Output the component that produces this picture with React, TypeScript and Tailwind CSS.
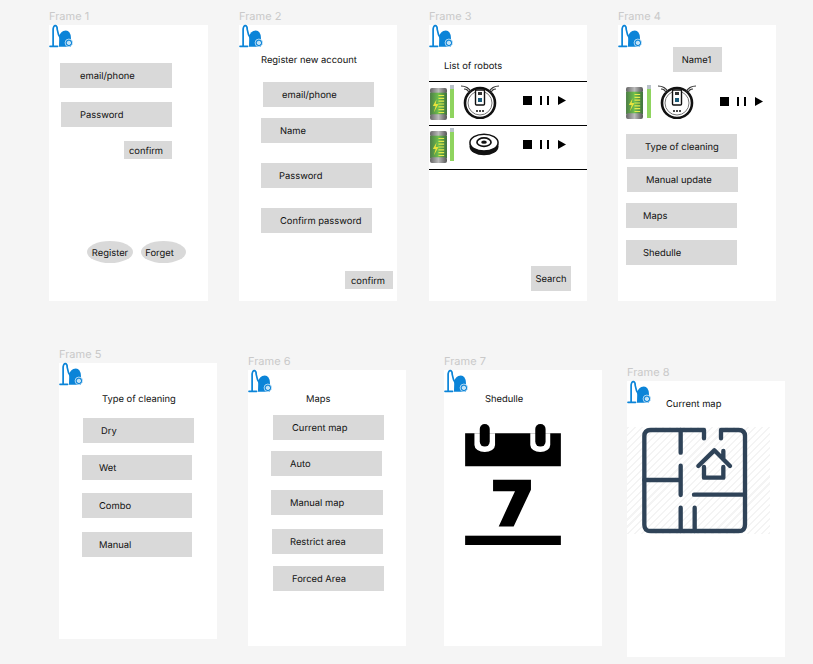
import type React from "react"

function VacuumIcon() {
  return (
    <svg viewBox="27 72 70 70" className="absolute left-0 top-[-1px] h-[24px] w-[24px]">
      <path d="M30 137 H52" stroke="#0b84d8" strokeWidth="5" strokeLinecap="round" fill="none" />
      <path d="M39 136 L39 86 Q41 76 46 77 Q51 78 51 88 Q53 104 62 116" stroke="#0b84d8" strokeWidth="5" fill="none" />
      <path d="M56 138 L57 108 Q60 92 76 91 Q90 92 91 112 L91 138 Z" fill="#0b84d8" />
      <circle cx="85" cy="127" r="11" fill="#0b84d8" stroke="#fff" strokeWidth="2" />
      <circle cx="85" cy="127" r="5" fill="#bfe3f8" stroke="#fff" strokeWidth="2" />
    </svg>
  )
}

function Battery({ className }: { className: string }) {
  return (
    <svg viewBox="3 1 18 34" className={`h-[32px] w-[17px] shrink-0 ${className}`}>
      <defs>
        <linearGradient id="batBody" x1="0" x2="1" y1="0" y2="0">
          <stop offset="0" stopColor="#4b7d45" />
          <stop offset="0.5" stopColor="#6fc04e" />
          <stop offset="1" stopColor="#3c6f3a" />
        </linearGradient>
        <linearGradient id="batCap" x1="0" x2="1" y1="0" y2="0">
          <stop offset="0" stopColor="#666" />
          <stop offset="0.5" stopColor="#bbb" />
          <stop offset="1" stopColor="#555" />
        </linearGradient>
      </defs>
      <rect x="3" y="1" width="18" height="6" rx="2" fill="url(#batCap)" />
      <rect x="3" y="6" width="18" height="24" fill="url(#batBody)" />
      <rect x="3" y="29" width="18" height="6" rx="2" fill="url(#batCap)" />
      <path d="M12 9h6M12 12h6M12 15h6M12 18h6M12 21h6M12 24h6M12 27h6" stroke="#e4ea4c" strokeWidth="1.2" />
      <path d="M10 13 L6 20 H9 L7 27 L12 18 H9 Z" fill="#e8e23c" />
    </svg>
  )
}

function RobotTop({ className }: { className: string }) {
  return (
    <svg viewBox="0 0 44 36" className={`h-[36px] w-[44px] shrink-0 ${className}`}>
      <circle cx="22" cy="20" r="15" fill="#fff" stroke="#111" strokeWidth="2.6" />
      <circle cx="22" cy="20" r="12" fill="none" stroke="#777" strokeWidth="1" />
      <rect x="17.5" y="7" width="9" height="15" rx="1" fill="#fff" stroke="#111" strokeWidth="1.4" />
      <rect x="20" y="9" width="4" height="3" fill="#333" />
      <rect x="20" y="15" width="4" height="4" fill="#1b5c7a" />
      <path d="M18 28h2M21 28h2M24 28h2" stroke="#111" strokeWidth="1.4" />
      <path d="M6 6 Q10 6 11 10M3 3 Q10 3 13 9M38 6 Q34 6 33 10M41 3 Q34 3 31 9" stroke="#333" strokeWidth="1.2" fill="none" />
    </svg>
  )
}

function RobotSide({ className }: { className: string }) {
  return (
    <svg viewBox="0 0 32 24" className={`h-[23px] w-[30px] shrink-0 ${className}`}>
      <ellipse cx="16" cy="14" rx="15.5" ry="9.5" fill="#111" />
      <ellipse cx="16" cy="10" rx="15" ry="9" fill="#fff" stroke="#111" strokeWidth="1.6" />
      <ellipse cx="16" cy="9.5" rx="7.5" ry="4.5" fill="#fff" stroke="#111" strokeWidth="1.8" />
      <ellipse cx="16" cy="9.5" rx="3" ry="1.8" fill="#111" />
    </svg>
  )
}

function Controls({ className }: { className: string }) {
  return (
    <div className={`flex items-center ${className}`}>
      <div className="h-[9px] w-[9px] bg-black" />
      <div className="ml-[8px] h-[9px] w-[2px] bg-black" />
      <div className="ml-[5px] h-[9px] w-[2px] bg-black" />
      <svg viewBox="0 0 8 9" className="ml-[9px] h-[9px] w-[8px]">
        <path d="M0 0 L8 4.5 L0 9 Z" fill="#000" />
      </svg>
    </div>
  )
}

function LevelBar({ className }: { className: string }) {
  return (
    <div className={`flex h-[33px] w-[4px] shrink-0 flex-col ${className}`}>
      <div className="h-[4px] bg-[#b9c2c9]" />
      <div className="flex-1 bg-[#8fd45f]" />
    </div>
  )
}

function Box({ className, children }: { className: string; children: React.ReactNode }) {
  return <div className={`flex items-center bg-[#d9d9d9] pt-[4px] text-[9.4px] text-[#111] ${className}`}>{children}</div>
}

function Frame({ label, className, children }: { label: string; className: string; children: React.ReactNode }) {
  return (
    <div className={`absolute flex h-[276px] w-[158px] flex-col bg-white ${className}`}>
      <div className="absolute left-0 top-[-16px] text-[11px] leading-[14px] text-[#c9c9c9]">{label}</div>
      <VacuumIcon />
      {children}
    </div>
  )
}

function Title({ className, children }: { className: string; children: React.ReactNode }) {
  return <div className={`text-[9.4px] leading-[14px] text-[#111] ${className}`}>{children}</div>
}

export default function App() {
  return (
    <div className="relative h-[664px] w-[813px] overflow-hidden bg-[#f5f5f5] font-['Inter',sans-serif] [text-rendering:geometricPrecision]">
      <Frame label="Frame 1" className="left-[49px] top-[25px] !w-[159px]">
        <Box className="ml-[11px] mt-[38px] h-[25px] w-[112px] pl-[20px]">email/phone</Box>
        <Box className="ml-[12px] mt-[14px] h-[25px] w-[111px] pl-[19px]">Password</Box>
        <Box className="ml-[75px] mt-[14px] h-[18px] w-[48px] justify-center pr-[4px]">confirm</Box>
        <div className="ml-[38px] mt-[82px] flex gap-[8px]">
          <Box className="h-[22px] w-[46px] justify-center rounded-[50%]">Register</Box>
          <Box className="h-[22px] w-[45px] justify-center rounded-[50%] pr-[8px]">Forget</Box>
        </div>
      </Frame>

      <Frame label="Frame 2" className="left-[239px] top-[25px]">
        <Title className="ml-[22px] mt-[29px]">Register new account</Title>
        <Box className="ml-[24px] mt-[14px] h-[25px] w-[111px] pl-[19px]">email/phone</Box>
        <Box className="ml-[22px] mt-[11px] h-[25px] w-[111px] pl-[19px]">Name</Box>
        <Box className="ml-[22px] mt-[20px] h-[25px] w-[111px] pl-[18px]">Password</Box>
        <Box className="ml-[22px] mt-[20px] h-[25px] w-[111px] pl-[19px]">Confirm password</Box>
        <Box className="ml-[106px] mt-[38px] h-[18px] w-[48px] justify-center pr-[2px]">confirm</Box>
      </Frame>

      <Frame label="Frame 3" className="left-[429px] top-[25px]">
        <Title className="ml-[15px] mt-[35px]">List of robots</Title>
        <div className="mt-[7px] border-t border-black">
          <div className="flex h-[43px] items-start">
            <Battery className="ml-[1px] mt-[6px]" />
            <LevelBar className="ml-[3px] mt-[3px]" />
            <RobotTop className="ml-[4px] mt-[1px]" />
            <Controls className="ml-[21px] mt-[14px]" />
          </div>
        </div>
        <div className="border-t border-black">
          <div className="flex h-[43px] items-start">
            <Battery className="ml-[1px] mt-[5px]" />
            <LevelBar className="ml-[3px] mt-[2px]" />
            <RobotSide className="ml-[15px] mt-[7px]" />
            <Controls className="ml-[24px] mt-[14px]" />
          </div>
        </div>
        <div className="border-t border-black" />
        <Box className="ml-[102px] mt-[96px] h-[25px] w-[40px] justify-center">Search</Box>
      </Frame>

      <Frame label="Frame 4" className="left-[618px] top-[25px]">
        <Box className="ml-[55px] mt-[22px] h-[25px] w-[49px] justify-center pr-[2px]">Name1</Box>
        <div className="mt-[11px] flex h-[37px] items-start">
          <Battery className="ml-[8px] mt-[4px]" />
          <LevelBar className="ml-[4px] mt-[2px]" />
          <RobotTop className="ml-[4px]" />
          <Controls className="ml-[21px] mt-[14px]" />
        </div>
        <Box className="ml-[8px] mt-[14px] h-[25px] w-[111px] pl-[19px]">Type of cleaning</Box>
        <Box className="ml-[9px] mt-[8px] h-[25px] w-[111px] pl-[19px]">Manual update</Box>
        <Box className="ml-[8px] mt-[11px] h-[25px] w-[111px] pl-[17px]">Maps</Box>
        <Box className="ml-[8px] mt-[12px] h-[25px] w-[111px] pl-[17px]">Shedulle</Box>
      </Frame>

      <Frame label="Frame 5" className="left-[59px] top-[363px]">
        <Title className="ml-[43px] mt-[30px]">Type of cleaning</Title>
        <Box className="ml-[24px] mt-[11px] h-[25px] w-[111px] pl-[18px]">Dry</Box>
        <Box className="ml-[23px] mt-[12px] h-[25px] w-[110px] pl-[17px]">Wet</Box>
        <Box className="ml-[23px] mt-[13px] h-[25px] w-[110px] pl-[17px]">Combo</Box>
        <Box className="ml-[23px] mt-[14px] h-[25px] w-[110px] pl-[17px]">Manual</Box>
      </Frame>

      <Frame label="Frame 6" className="left-[248px] top-[370px]">
        <Title className="ml-[58px] mt-[23px]">Maps</Title>
        <Box className="ml-[25px] mt-[8px] h-[25px] w-[111px] pl-[19px]">Current map</Box>
        <Box className="ml-[23px] mt-[11px] h-[25px] w-[111px] pl-[19px]">Auto</Box>
        <Box className="ml-[23px] mt-[14px] h-[25px] w-[112px] pl-[19px]">Manual map</Box>
        <Box className="ml-[24px] mt-[14px] h-[25px] w-[111px] pl-[18px]">Restrict area</Box>
        <Box className="ml-[25px] mt-[12px] h-[25px] w-[111px] pl-[19px]">Forced Area</Box>
      </Frame>

      <Frame label="Frame 7" className="left-[444px] top-[370px]">
        <Title className="ml-[41px] mt-[23px]">Shedulle</Title>
        <svg viewBox="76 222 288 364" className="ml-[21px] mt-[17px] h-[121px] w-[96px]">
          <path d="M76 250 H364 V349 H76 Z" fill="#000" />
          <path d="M104 250 V285 A31 21 0 0 0 166 285 V250 Z M272 250 V285 A30 21 0 0 0 332 285 V250 Z" fill="#fff" />
          <rect x="120" y="222" width="30" height="68" rx="15" fill="#000" />
          <rect x="287" y="222" width="31" height="68" rx="15" fill="#000" />
          <path d="M160 390 H274 V420 L222 530 H177 L226 424 H160 Z" fill="#000" />
          <rect x="76" y="558" width="288" height="28" fill="#000" />
        </svg>
      </Frame>

      <Frame label="Frame 8" className="left-[627px] top-[381px]">
        <Title className="ml-[39px] mt-[17px]">Current map</Title>
        <svg
          viewBox="21 198 429 321"
          className="mt-[15px] h-[107px] w-[143px] bg-[repeating-linear-gradient(135deg,#f4f4f4_0px,#f4f4f4_1.5px,#ffffff_1.5px,#ffffff_5px)]"
        >
          <g stroke="#2f4358" strokeWidth="13" strokeLinecap="round" strokeLinejoin="round" fill="none">
            <path d="M252 232 V207 H92 Q73 207 73 226 V491 Q73 510 92 510 H356 Q375 510 375 491 V226 Q375 207 356 207 H303 V232" />
            <path d="M182 207 V275 M182 314 V402 M73 357 H182 M222 401 H375 M182 440 V510 M224 440 V510" />
            <path d="M235 315 L283 268 L330 315 M310 270 V292 M252 318 V350 H310 V318" />
          </g>
        </svg>
      </Frame>
    </div>
  )
}
